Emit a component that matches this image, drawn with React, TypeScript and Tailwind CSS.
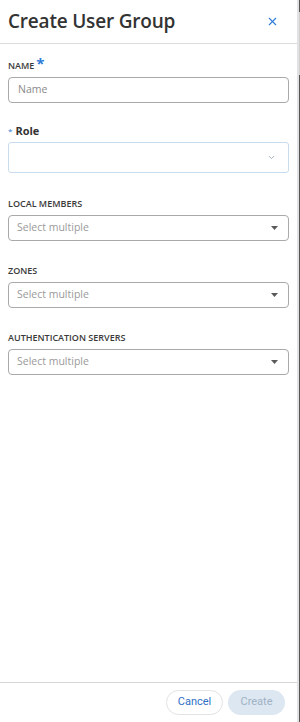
import { X, ChevronDown } from 'lucide-react'

function Caret() {
  return (
    <svg width="7" height="4" viewBox="0 0 7 4" className="shrink-0">
      <path d="M0 0 L7 0 L3.5 4 Z" fill="#5a5a5a" />
    </svg>
  )
}

function MultiSelect({ label }: { label: string }) {
  return (
    <div className="flex flex-col">
      <div className="text-[9px] font-semibold text-[#3a3a3a] uppercase leading-none mb-[7px]">{label}</div>
      <div className="h-[26px] rounded-[4px] border border-[#a9a9a9] flex items-center pl-[8px] pr-[10px]">
        <span className="flex-1 text-[10.5px] text-[#9a9a9a]">Select multiple</span>
        <Caret />
      </div>
    </div>
  )
}

export default function App() {
  return (
    <div className="w-[300px] h-[722px] flex bg-white font-['Open_Sans',sans-serif]">
      <div className="w-[297px] h-full flex flex-col">
        {/* Header */}
        <div className="h-[44px] shrink-0 border-b border-[#dcdcdc] flex items-center justify-between pl-[8px] pr-[18px]">
          <h1 className="text-[19px] font-semibold text-[#333] tracking-[-0.2px]">Create User Group</h1>
          <X className="size-[13px] text-[#2e7bd6]" strokeWidth={2} />
        </div>

        {/* Body */}
        <div className="flex-1 flex flex-col px-[8px] pt-[14px]">
          <div className="flex flex-col">
            <div className="flex items-start leading-none mb-[7px]">
              <span className="text-[9px] font-semibold text-[#3a3a3a] mt-[3px]">NAME</span>
              <span className="text-[15px] text-[#2e7bd6] font-bold ml-[2px] -mt-[2px] h-[10px]">*</span>
            </div>
            <div className="h-[26px] rounded-[4px] border border-[#a9a9a9] flex items-center pl-[9px]">
              <span className="text-[10.5px] text-[#8a8a8a]">Name</span>
            </div>
          </div>

          <div className="flex flex-col mt-[22px]">
            <div className="flex items-center leading-none mb-[6px]">
              <span className="text-[8px] text-[#2e7bd6] mr-[3px]">*</span>
              <span className="text-[11px] font-bold text-[#333]">Role</span>
            </div>
            <div className="h-[31px] rounded-[3px] border border-[#c9dcee] flex items-center justify-end pr-[12px]">
              <ChevronDown className="size-[9px] text-[#8a9aab]" strokeWidth={2} />
            </div>
          </div>

          <div className="mt-[26px] flex flex-col gap-[25px]">
            <MultiSelect label="Local Members" />
            <MultiSelect label="Zones" />
            <MultiSelect label="Authentication Servers" />
          </div>
        </div>

        {/* Footer */}
        <div className="h-[40px] shrink-0 border-t border-[#d6d6d6] flex items-center justify-end gap-[5px] pr-[12px] font-['Roboto',sans-serif]">
          <button className="w-[57px] h-[25px] rounded-full border border-[#e3e3e3] bg-white text-[11px] text-[#2f6fc4]">Cancel</button>
          <button className="w-[57px] h-[25px] rounded-full bg-[#dde7f1] text-[11px] text-[#9fb2c6]">Create</button>
        </div>
      </div>
      <div className="w-[3px] h-full flex">
        <div className="w-[2px] h-full bg-[#e2e2e2]" />
        <div className="w-[1px] h-full flex flex-col">
          <div className="h-[12px] bg-[#555]" />
          <div className="h-[63px] bg-[#d0d0d0]" />
          <div className="flex-1 bg-[#555]" />
        </div>
      </div>
    </div>
  )
}
